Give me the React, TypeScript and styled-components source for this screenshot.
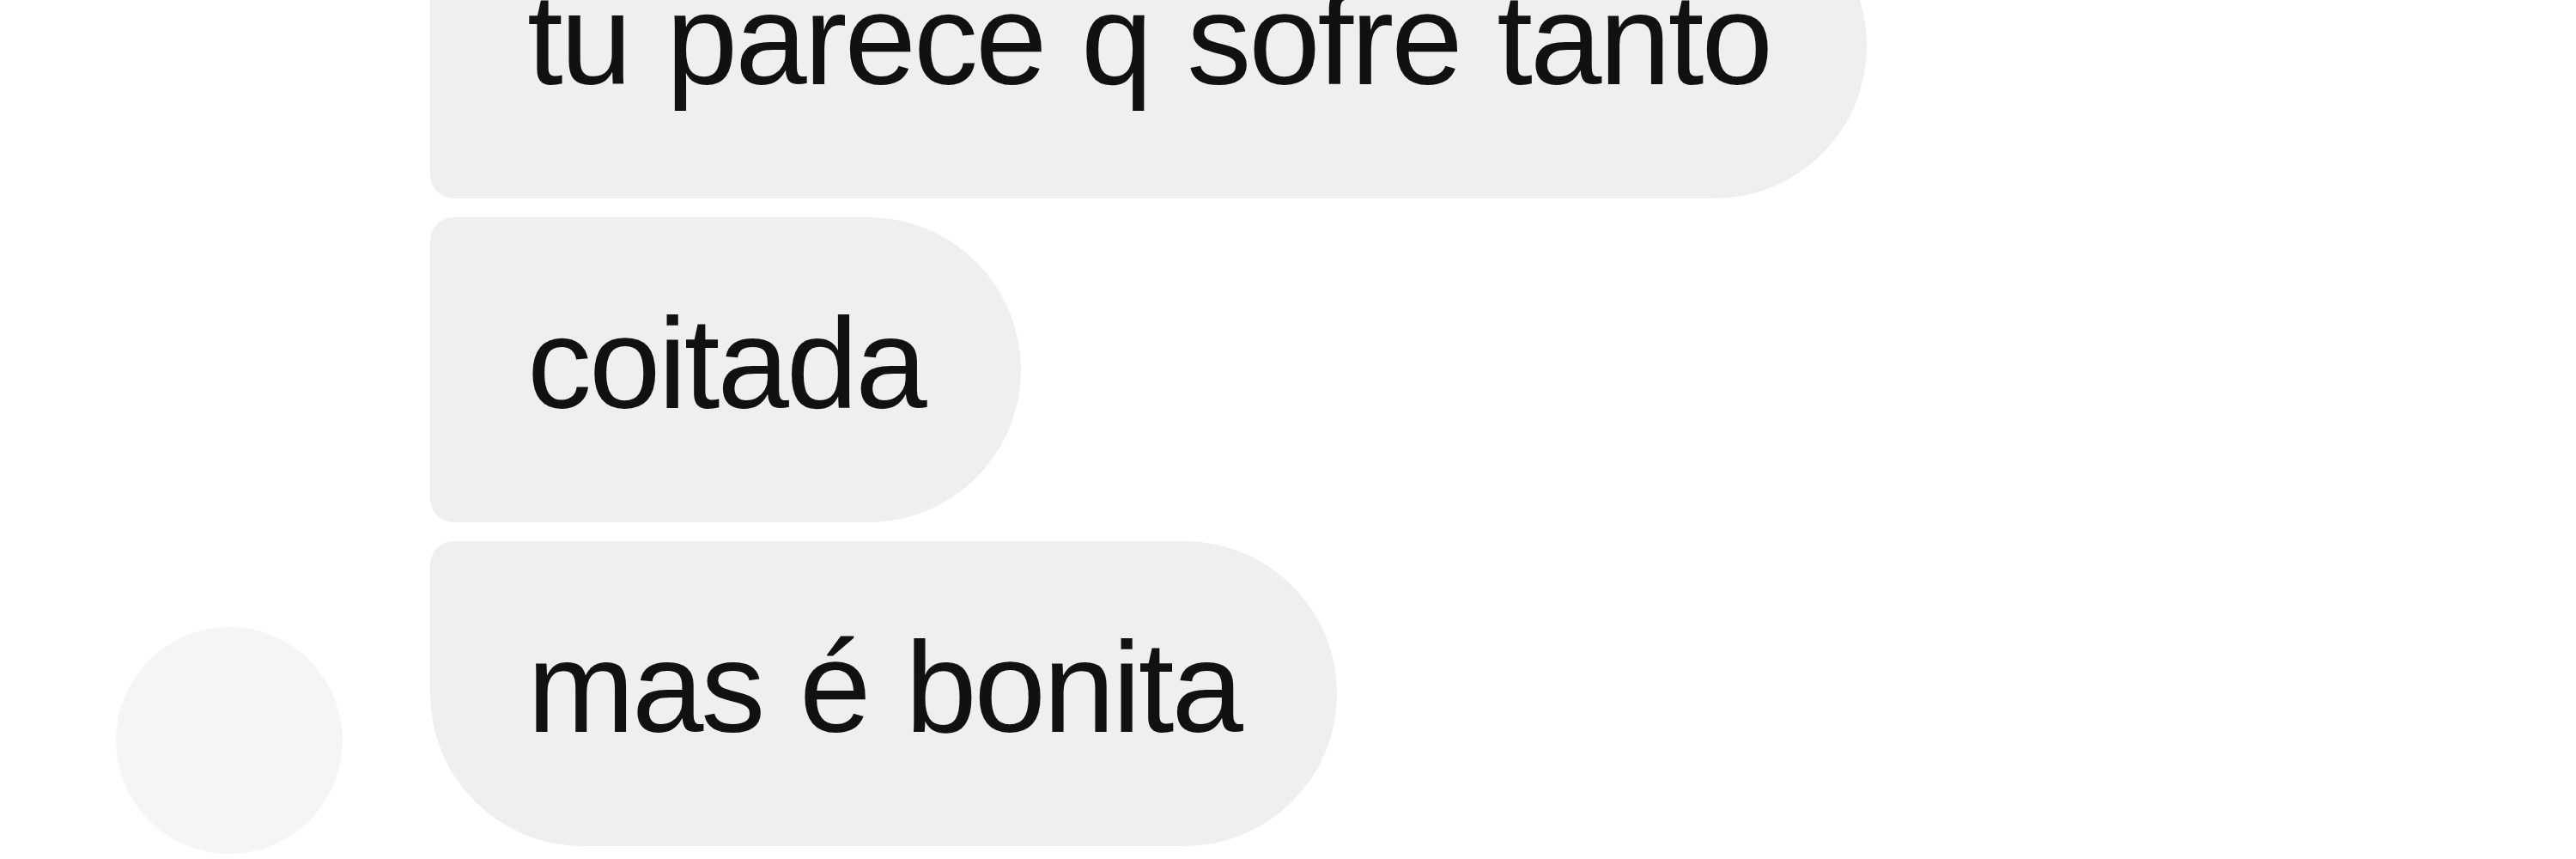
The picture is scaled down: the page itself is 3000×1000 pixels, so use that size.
import React from "react";
import styled, { createGlobalStyle } from "styled-components";

const GlobalStyle = createGlobalStyle`
  html, body {
    margin: 0;
    padding: 0;
    background: #ffffff;
    overflow: hidden;
  }
  body {
    font-family: "Liberation Sans", Arial, Helvetica, sans-serif;
  }
`;

const Page = styled.div`
  width: 3000px;
  height: 1000px;
  background: #ffffff;
  overflow: hidden;
`;

const Thread = styled.div`
  display: flex;
  flex-direction: row;
  align-items: flex-end;
  gap: 102px;
  padding-left: 135px;
  margin-top: -124px;
`;

const Avatar = styled.div`
  flex: none;
  width: 264px;
  height: 264px;
  border-radius: 50%;
  background: #f5f5f5;
  margin-bottom: -9px;
`;

const Group = styled.div`
  display: flex;
  flex-direction: column;
  align-items: flex-start;
  gap: 22px;
`;

const Bubble = styled.div<{ $last?: boolean }>`
  box-sizing: border-box;
  height: 355px;
  padding: 80px 112px 95px 113px;
  background: #efefef;
  color: #111111;
  font-family: "Liberation Sans", Arial, Helvetica, sans-serif;
  font-size: 150px;
  line-height: 180px;
  letter-spacing: -3px;
  word-spacing: 4px;
  white-space: nowrap;
  border-radius: ${(p) => (p.$last ? "28px 180px 180px 180px" : "28px 180px 180px 28px")};
`;

const messages = ["tu parece q sofre tanto", "coitada", "mas é bonita"];

export default function App() {
  return (
    <Page>
      <GlobalStyle />
      <Thread>
        <Avatar />
        <Group>
          {messages.map((m, i) => (
            <Bubble key={m} $last={i === messages.length - 1}>
              {m}
            </Bubble>
          ))}
        </Group>
      </Thread>
    </Page>
  );
}
